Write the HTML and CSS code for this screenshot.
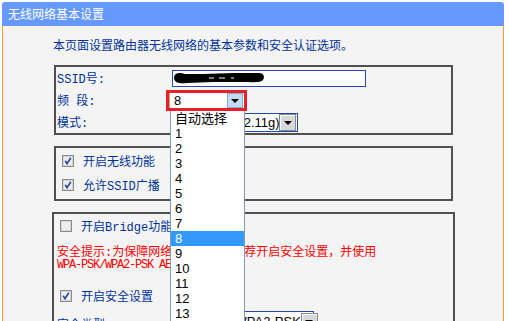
FILE: index.html
```html
<!DOCTYPE html>
<html>
<head>
<title>无线网络基本设置</title>
<meta charset="utf-8">
<link rel="stylesheet" href="styles.css">
</head>
<body>

<div class="page">
    <div class="titlebar">无线网络基本设置</div>

    <div class="content">
        <p class="desc">本页面设置路由器无线网络的基本参数和安全认证选项。</p>

        <div class="box box-basic">
            <div class="row">
                <span class="label">SSID号:</span>
                <div class="ssid">
                    <svg width="92" height="14" viewBox="0 0 92 14">
                        <path d="M1 7 C1 2 6 1 12 3 L30 3 L60 2 L86 2 C91 2 92 6 90 9 C88 12 80 11 70 11 L40 11 L14 12 C8 13 1 12 1 7 Z" fill="#000"/>
                        <path d="M36 7h5M46 7h6M58 7h3" stroke="#fff" stroke-width="1"/>
                    </svg>
                </div>
            </div>
            <div class="row">
                <span class="label">频 段:</span>
                <div class="mark">
                    <div class="select sel-channel">
                        <span class="value">8</span>
                        <span class="btn btn-blue"><i class="tri"></i></span>
                    </div>
                    <ul class="droplist">
                        <li>自动选择</li>
                        <li>1</li>
                        <li>2</li>
                        <li>3</li>
                        <li>4</li>
                        <li>5</li>
                        <li>6</li>
                        <li>7</li>
                        <li class="active">8</li>
                        <li>9</li>
                        <li>10</li>
                        <li>11</li>
                        <li>12</li>
                        <li>13</li>
                    </ul>
                </div>
            </div>
            <div class="row">
                <span class="label">模式:</span>
                <div class="select sel-mode">
                    <span class="value">54Mbps (802.11g)</span>
                    <span class="btn btn-grey"><i class="tri"></i></span>
                </div>
            </div>
        </div>

        <div class="box box-opts">
            <div class="cb-row">
                <svg class="cb" width="12" height="12" viewBox="0 0 12 12"><rect x=".5" y=".5" width="11" height="11" fill="#eeeeee" stroke="#8c8c8c"/><rect x="1.5" y="1.5" width="9" height="9" fill="none" stroke="#d4d4d4"/><path d="M3.2 5.8 L5 8.6 L8.8 2.8" fill="none" stroke="#2d4c9c" stroke-width="1.7"/></svg>
                <span>开启无线功能</span>
            </div>
            <div class="cb-row">
                <svg class="cb" width="12" height="12" viewBox="0 0 12 12"><rect x=".5" y=".5" width="11" height="11" fill="#eeeeee" stroke="#8c8c8c"/><rect x="1.5" y="1.5" width="9" height="9" fill="none" stroke="#d4d4d4"/><path d="M3.2 5.8 L5 8.6 L8.8 2.8" fill="none" stroke="#2d4c9c" stroke-width="1.7"/></svg>
                <span>允许SSID广播</span>
            </div>
        </div>

        <div class="box box-security">
            <div class="cb-row">
                <svg class="cb" width="12" height="12" viewBox="0 0 12 12"><rect x=".5" y=".5" width="11" height="11" fill="#eeeeee" stroke="#8c8c8c"/><rect x="1.5" y="1.5" width="9" height="9" fill="none" stroke="#d4d4d4"/></svg>
                <span>开启Bridge功能</span>
            </div>
            <p class="warn">安全提示:为保障网络安全，强烈推荐开启安全设置，并使用<br><span class="mono">WPA-PSK/WPA2-PSK AES</span>加密方法。</p>
            <div class="cb-row cb-security">
                <svg class="cb" width="12" height="12" viewBox="0 0 12 12"><rect x=".5" y=".5" width="11" height="11" fill="#eeeeee" stroke="#8c8c8c"/><rect x="1.5" y="1.5" width="9" height="9" fill="none" stroke="#d4d4d4"/><path d="M3.2 5.8 L5 8.6 L8.8 2.8" fill="none" stroke="#2d4c9c" stroke-width="1.7"/></svg>
                <span>开启安全设置</span>
            </div>
            <div class="row row-type">
                <span class="label">安全类型:</span>
                <div class="select sel-type">
                    <span class="value">WPA-PSK/WPA2-PSK</span>
                    <span class="btn btn-grey"><i class="tri"></i></span>
                </div>
            </div>
        </div>
    </div>
</div>

</body>
</html>
```

FILE: styles.css
```css
html, body {
    margin: 0;
    padding: 0;
    overflow: hidden;
    background-color: #ffffff;
}
.page {
    margin: 2px 0 0 2px;
    width: 502px;
    height: 319px;
    overflow: hidden;
    font-family: "Liberation Mono", "Noto Sans CJK SC", monospace;
    font-size: 12px;
}
.titlebar {
    height: 24px;
    line-height: 24px;
    padding-left: 6px;
    background-color: #6699ff;
    color: #ffffff;
    font-family: "Noto Sans CJK SC", sans-serif;
    border-radius: 3px 3px 0 0;
}
.content {
    height: 295px;
    padding-top: 11px;
    box-sizing: border-box;
    background-color: #f4f4f4;
    border-left: 1px solid #ff9933;
    border-right: 1px solid #ff9933;
}
.desc {
    margin: 0 0 12px 50px;
    line-height: 16px;
    color: #003399;
    font-family: "Noto Sans CJK SC", sans-serif;
}
.box {
    border: 2px solid #505050;
}
.box-basic {
    margin-left: 51px;
    width: 395px;
}
.row {
    display: flex;
    align-items: center;
    height: 22px;
}
.label {
    width: 113px;
    padding-left: 1px;
    color: #003399;
    white-space: pre;
}
.ssid {
    margin-left: 2px;
    width: 192px;
    height: 15px;
    border: 1px solid #2049a8;
    background-color: #ffffff;
    display: flex;
    align-items: center;
}
.mark {
    position: relative;
    margin-left: -4px;
    border: 3px solid #e8202a;
}
.select {
    display: flex;
    align-items: center;
    justify-content: space-between;
    background-color: #ffffff;
    box-sizing: border-box;
    font-family: "Liberation Sans", "Noto Sans CJK SC", sans-serif;
    font-size: 13px;
    color: #000000;
}
.select .value {
    padding-left: 4px;
    white-space: nowrap;
    overflow: hidden;
}
.sel-channel {
    width: 75px;
    height: 15px;
    border-left: 1px solid #d2a870;
}
.btn {
    display: flex;
    align-items: center;
    justify-content: center;
    flex-shrink: 0;
    box-sizing: border-box;
}
.btn-blue {
    width: 16px;
    height: 15px;
    margin-right: 1px;
    background-color: #c4dcf3;
    border: 1px solid #86a9d0;
}
.btn-grey {
    width: 17px;
    height: 17px;
    margin-right: 1px;
    background-color: #d8d8d8;
    border: 1px solid #8a8a8a;
    box-shadow: inset 1px 1px 0 #ffffff;
}
.tri {
    width: 0;
    height: 0;
    border-left: 4px solid transparent;
    border-right: 4px solid transparent;
    border-top: 4px solid #000000;
    margin-top: 1px;
}
.droplist {
    position: absolute;
    left: 1px;
    top: 18px;
    z-index: 5;
    width: 73px;
    margin: 0;
    padding: 0;
    list-style: none;
    background-color: #ffffff;
    border: 1px solid #7f9db9;
    border-top: none;
    font-family: "Liberation Sans", "Noto Sans CJK SC", sans-serif;
    font-size: 13px;
    color: #000000;
}
.droplist li {
    height: 15px;
    line-height: 15px;
    padding-left: 4px;
}
.droplist li.active {
    background-color: #3399ff;
    color: #ffffff;
}
.sel-mode {
    width: 128px;
    height: 19px;
    border: 1px solid #2049a8;
}
.box-opts {
    margin: 11px 0 0 51px;
    width: 395px;
    padding: 1px 0 2px;
}
.cb-row {
    display: flex;
    align-items: center;
    gap: 9px;
    height: 24px;
    padding-left: 6px;
    color: #003399;
}
.cb {
    flex-shrink: 0;
}
.box-security {
    margin: 11px 0 0 49px;
    width: 399px;
    height: 200px;
}
.warn {
    margin: 9px 0 0 3px;
    line-height: 12px;
    color: #ff0000;
}
.mono {
    letter-spacing: -1.2px;
}
.cb-security {
    margin-top: 13px;
}
.row-type {
    align-items: flex-start;
    height: 26px;
    padding-left: 3px;
}
.row-type .label {
    padding-top: 7px;
    padding-left: 0;
}
.sel-type {
    margin-top: 3px;
    width: 144px;
    height: 20px;
    border: 1px solid #2049a8;
}
.sel-type .value {
    padding-left: 1px;
    overflow: visible;
}
```
